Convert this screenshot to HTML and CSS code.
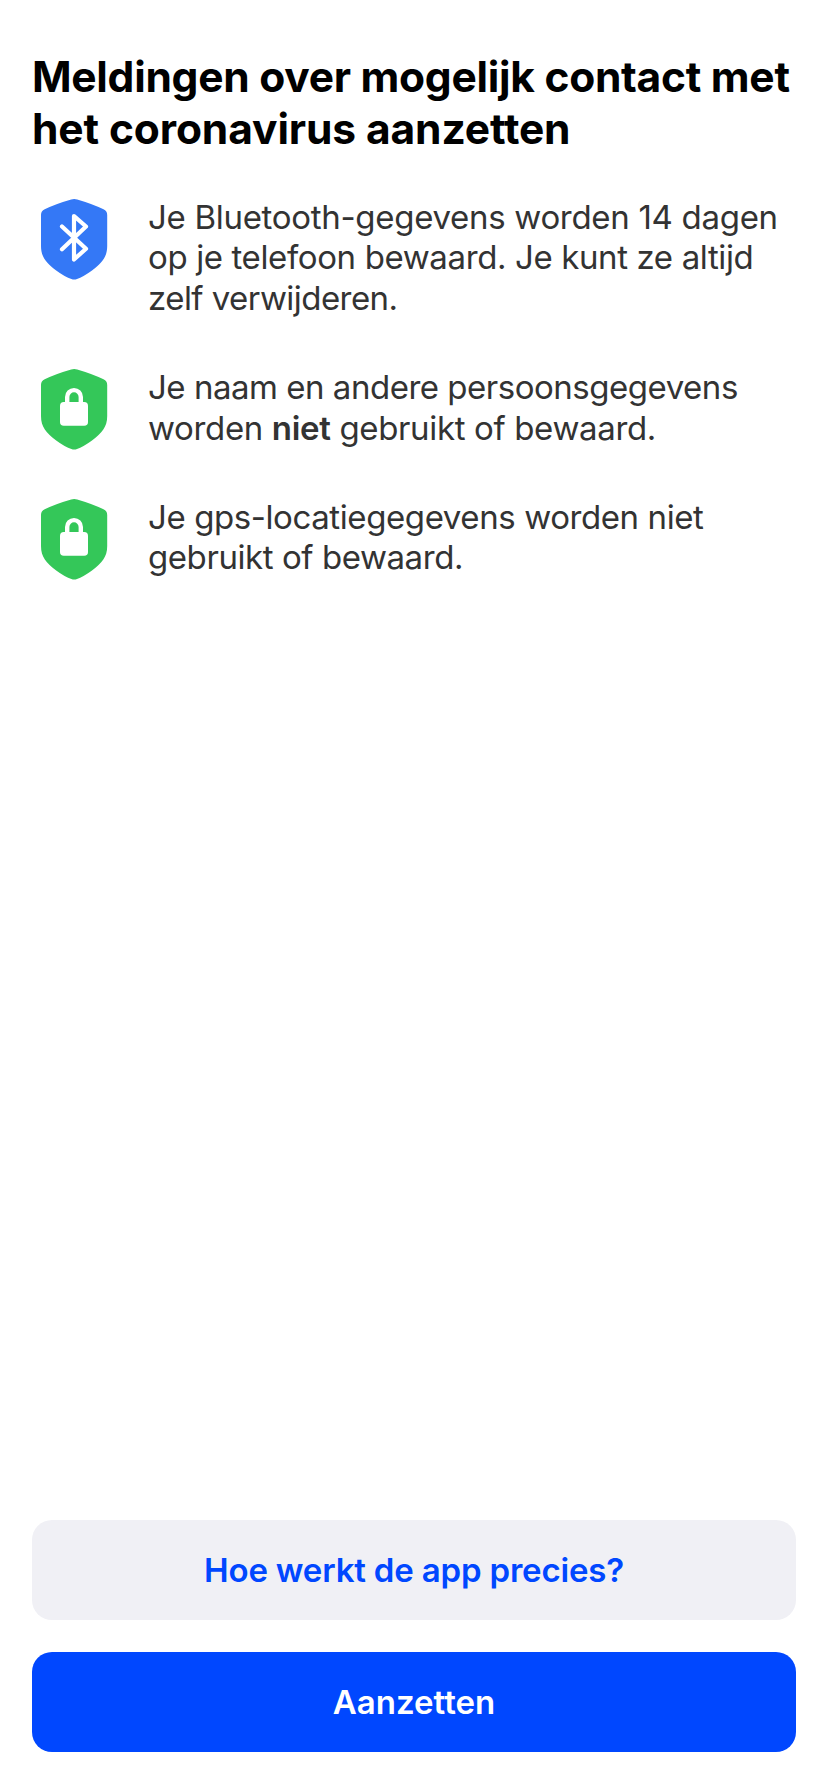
FILE: index.html
```html
<!DOCTYPE html>
<html lang="nl">
<head>
<meta charset="utf-8">
<title>Meldingen aanzetten</title>
<link rel="stylesheet" href="styles.css">
</head>
<body>
<svg class="defs" width="0" height="0">
  <symbol id="shield" viewBox="0 0 68 81"><path d="M31.200 .5Q34.200 -.5 37.200 .5Q52 4.800 63.500 10.300Q67.200 12 67.200 16V47C67.200 58 62 64 52 71.500Q43 78 37 80Q34.200 81 31.400 80Q25 78 16.200 71.500C6.200 64 1 58 1 47V16Q1 12 4.700 10.300Q16 4.800 31.200 .5Z" fill="currentColor"/></symbol>
  <symbol id="lock" viewBox="0 0 68 81"><rect x="20" y="33" width="28" height="23.700" rx="3.800" fill="#fff"/><path d="M27.200 35V27.900a6.800 6.800 0 0 1 13.600 0V35" fill="none" stroke="#fff" stroke-width="4.400"/></symbol>
</svg>
<main class="screen">
  <h1 class="title"><span class="title-a">Meldingen over mogelijk contact met</span><br><span class="title-b">het coronavirus aanzetten</span></h1>
  <ul class="points">
    <li class="point"><svg class="icon blue" viewBox="0 0 68 81"><use href="#shield"/><path d="M22 27.500L46 49.700L34 60.500V17L46 27.500L22 50.200" fill="none" stroke="#fff" stroke-width="4.200" stroke-linecap="round" stroke-linejoin="round"/></svg>
      <p class="text"><span class="a1">Je Bluetooth-gegevens worden 14 dagen</span><br><span class="a2">op je telefoon bewaard. Je kunt ze altijd</span><br><span class="a3">zelf verwijderen.</span></p></li>
    <li class="point"><svg class="icon green" viewBox="0 0 68 81"><use href="#shield"/><use href="#lock"/></svg>
      <p class="text"><span class="b1">Je naam en andere persoonsgegevens</span><br><span class="b2">worden <b>niet</b> gebruikt of bewaard.</span></p></li>
    <li class="point"><svg class="icon green" viewBox="0 0 68 81"><use href="#shield"/><use href="#lock"/></svg>
      <p class="text"><span class="c1">Je gps-locatiegegevens worden niet</span><br><span class="c2">gebruikt of bewaard.</span></p></li>
  </ul>
  <div class="actions">
    <button class="button secondary">Hoe werkt de app precies?</button>
    <button class="button primary">Aanzetten</button>
  </div>
</main>
</body>
</html>
```
FILE: styles.css
```css
* { box-sizing: border-box; }
body { margin: 0; background: #fff; font-family: Inter, sans-serif; font-feature-settings: "calt" 0, "liga" 0; }
.defs { display: block; }
.screen { height: 1792px; padding: 51px 32px 40px; display: flex; flex-direction: column; }
.title { margin: 0; font-size: 42.5px; line-height: 52px; font-weight: 700; white-space: nowrap; color: #000; }
.title-a { letter-spacing: -.27px; }
.title-b { letter-spacing: -.12px; }
.points { list-style: none; margin: 42px 0 0; padding: 0; display: flex; flex-direction: column; gap: 49px; }
.point { display: flex; gap: 40px; padding-left: 8px; align-items: flex-start; }
.icon { width: 68px; height: 81px; flex: none; margin: 2px 0 -4px; }
.blue { color: #3478f6; }
.green { color: #34c759; }
.text { margin: 0; font-size: 33px; line-height: 40.4px; color: #333; white-space: nowrap; }
.text b { font-weight: 600; }
.a1 { letter-spacing: -.3px; }
.a2 { letter-spacing: -.38px; }
.a3 { letter-spacing: -.55px; }
.b1 { letter-spacing: -.48px; }
.b2 { letter-spacing: -.35px; }
.c1 { letter-spacing: -.41px; }
.c2 { letter-spacing: -.43px; }
.actions { margin-top: auto; display: flex; flex-direction: column; gap: 32px; }
.button { height: 100px; padding: 0; border: 0; border-radius: 20px; font: 600 33px Inter, sans-serif; font-feature-settings: "calt" 0, "liga" 0; }
.secondary { background: #f0f0f5; color: #0047ff; letter-spacing: -.18px; }
.primary { background: #0047ff; color: #fff; }
```
